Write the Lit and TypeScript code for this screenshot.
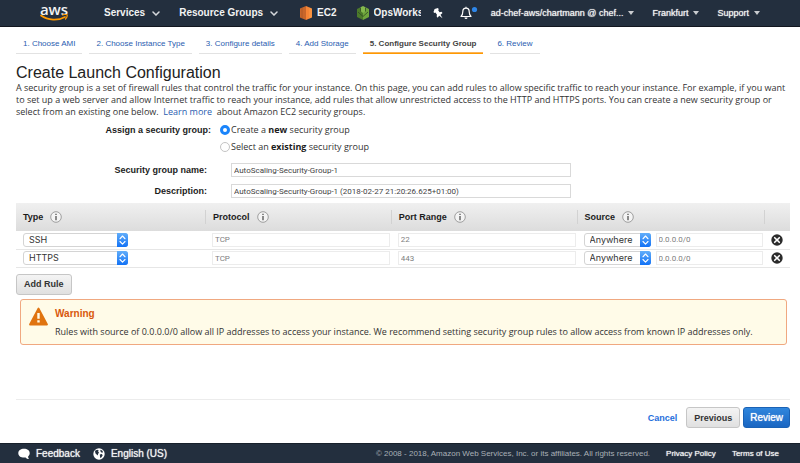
import { LitElement, html, css, svg } from "lit";
import { customElement, state } from "lit/decorators.js";

interface Rule {
  type: string;
  protocol: string;
  port: string;
  source: string;
  cidr: string;
}

const chevron = html`<svg class="chevron" viewBox="0 0 8 5" aria-hidden="true">
  <path d="M1 1l3 3 3-3" fill="none" stroke="currentColor" stroke-width="1.5" stroke-linecap="round" />
</svg>`;

const caret = html`<svg class="caret" viewBox="0 0 6 4" aria-hidden="true">
  <path d="M0 0h6L3 4z" fill="currentColor" />
</svg>`;

const info = html`<svg class="info" viewBox="0 0 12 12" aria-hidden="true">
  <circle cx="6" cy="6" r="5.3" fill="#f4f4f4" stroke="#8a8a8a" stroke-width=".8" />
  <path d="M5.4 2.8h1.2v1.2H5.4zM5.4 5h1.2v4.200H5.4z" fill="#444" />
</svg>`;

const arrows = svg`
  <path d="M0 0h8.500a2.500 2.500 0 0 1 2.500 2.500v8a2.500 2.500 0 0 1-2.500 2.500H0z" fill="url(#blue)" />
  <path d="M3 5.300l2.500-2.500L8 5.300M3 7.900l2.500 2.500L8 7.900" fill="none" stroke="#fff" stroke-width="1.1"
    stroke-linecap="round" stroke-linejoin="round" />`;

@customElement("app-root")
export class AppRoot extends LitElement {
  @state() private rules: Rule[] = [
    { type: "SSH", protocol: "TCP", port: "22", source: "Anywhere", cidr: "0.0.0.0/0" },
    { type: "HTTPS", protocol: "TCP", port: "443", source: "Anywhere", cidr: "0.0.0.0/0" },
  ];

  static styles = css`
    :host {
      display: flex;
      flex-direction: column;
      min-height: 100vh;
      background: #fff;
      color: #333;
      font: 9px/12px "Liberation Sans", Arial, sans-serif;
    }
    *, *::before, *::after { box-sizing: border-box; }
    svg { display: block; flex: none; }
    a { color: #2a5db0; text-decoration: none; }
    button, input, select { font: inherit; color: inherit; margin: 0; }
    button { cursor: pointer; }
    b, th { font-weight: 700; color: #1c1c1c; }

    .topbar {
      display: flex;
      align-items: center;
      height: 27px;
      padding: 0 40px;
      background: #232f3e;
      border-bottom: 1px solid #12161f;
      color: #f2f3f3;
      font-size: 10px;
      font-weight: 700;
    }
    .topbar a { display: flex; align-items: center; color: inherit; white-space: nowrap; }
    .topbar button {
      display: flex;
      align-items: center;
      padding: 0;
      border: 0;
      background: none;
      white-space: nowrap;
    }
    .menus, .pins, .account { display: flex; align-items: center; }
    .menus { gap: 19px; margin-left: 36px; }
    .menus button { gap: 7px; }
    .pins { gap: 20px; margin-left: 22px; }
    .pins a { gap: 5px; }
    .clip { width: 47px; overflow: hidden; }
    .account { gap: 18px; margin-left: auto; font-size: 9px; }
    .account button { gap: 5px; }
    .brand.brand {
      flex-direction: column;
      width: 28px;
      font: 600 15px/10px "Open Sans", sans-serif;
    }
    .smile { width: 28px; height: 8px; }
    .chevron { width: 8px; height: 5px; color: #d5d8dc; }
    .caret { width: 6px; height: 4px; color: #c9ccd0; }
    .service { width: 12px; height: 14px; }
    .pin { width: 11px; height: 11px; margin-left: 11px; }
    .bell { width: 18px; height: 14px; margin-left: 17px; }

    main { flex: 1; display: flex; flex-direction: column; padding: 0 10px 0 16px; }
    .steps {
      display: flex;
      gap: 7px;
      margin: 0;
      padding: 9px 0 0;
      list-style: none;
      font-size: 8px;
    }
    .steps a {
      display: block;
      padding: 2px 7px 3px;
      border-bottom: 1px solid #e2e2e2;
      white-space: nowrap;
    }
    .steps a[aria-current] {
      border-color: #f90;
      box-shadow: inset 0 -1px #fbb355;
      color: #444;
      font-weight: 700;
    }
    h1 { margin: 10px 0 0; font: 400 16px/18px "Liberation Sans", Arial, sans-serif; color: #222; }
    p { margin: 0; font-family: "Open Sans", sans-serif; }
    .intro { white-space: nowrap; }

    .form { display: grid; gap: 7px; padding-top: 6px; }
    .field { display: grid; grid-template-columns: 191px 1fr; column-gap: 24px; align-items: center; }
    .field > label { text-align: right; font-weight: 700; color: #1c1c1c; }
    .choices {
      display: grid;
      grid-template-columns: 195px 1fr;
      column-gap: 9px;
      row-gap: 5px;
      margin: 0 0 3px;
      padding: 0;
      border: 0;
    }
    .choices > b { grid-row: span 2; text-align: right; }
    .choices label { display: flex; align-items: center; gap: 1px; font-family: "Open Sans", sans-serif; }
    .choices span { white-space: pre; }
    .radio {
      appearance: none;
      width: 10px;
      height: 10px;
      border: 1px solid #c4c4c4;
      border-radius: 50%;
      background: #fff;
    }
    .radio:checked { border: 3px solid #1a84fb; }
    .text {
      width: 100%;
      height: 14px;
      padding: 0 2px;
      border: 1px solid #d9d9d9;
      background: #fff;
      color: #444;
      font: 8px/12px Roboto, sans-serif;
    }
    .wide { max-width: 340px; }

    .rules { width: 100%; margin-top: 5px; border-collapse: collapse; table-layout: fixed; }
    .rules th {
      height: 28px;
      padding: 0 7px;
      background: linear-gradient(#f0f0f0, #dcdcdc);
      text-align: left;
    }
    .head { display: flex; align-items: center; gap: 7px; height: 14px; }
    .rules th + th { padding-left: 0; }
    .rules th + th .head { border-left: 1px solid #d2d2d2; padding-left: 7px; }
    .rules td { height: 18px; padding: 0 1px 0 7px; border-bottom: 1px solid #e6e6e6; }
    .rules td.del { padding: 0 0 0 7px; }
    .c-type { width: 189px; }
    .c-main { width: 24%; }
    .c-del { width: 26px; }
    .rules .text { display: block; border-color: #ececec; color: #808080; }
    .info { width: 12px; height: 12px; }
    .pick { display: grid; flex: none; width: 105px; height: 14px; }
    .pick > * { grid-area: 1 / 1; }
    .pick select {
      appearance: none;
      height: 14px;
      padding: 0 14px 0 5px;
      border: 1px solid #d4d4d4;
      border-radius: 3px;
      background: #fff;
      color: #333;
      font: 9px/12px Inter, sans-serif;
    }
    .pick svg { justify-self: end; width: 11px; height: 14px; pointer-events: none; }
    .source { display: flex; gap: 5px; }
    .source .pick { width: 67px; }
    .source .text { flex: 1; min-width: 0; }
    .remove { display: block; padding: 0; border: 0; background: none; }
    .remove svg { width: 12px; height: 12px; }

    .btn {
      height: 21px;
      padding: 0 7px;
      border: 1px solid #c6c6c6;
      border-radius: 3px;
      background: linear-gradient(#f4f4f4, #e0e0e0);
      color: #333;
      font-weight: 700;
      white-space: nowrap;
    }
    .add { align-self: flex-start; margin-top: 6px; }
    .warning {
      display: flex;
      gap: 7px;
      margin: 4px 3px 0 4px;
      padding: 7px 8px 6px;
      border: 1px solid #f0a880;
      border-radius: 3px;
      background: #fffbe8;
    }
    .warning svg { width: 19px; height: 19px; }
    .warning h2 { margin: 0 0 6px; font-size: 10px; line-height: 13px; color: #d9580c; }

    .actions {
      display: flex;
      align-items: center;
      justify-content: flex-end;
      gap: 3px;
      margin-top: auto;
      padding: 7px 0 15px;
      border-top: 1px solid #ececec;
    }
    .cancel { margin-right: 6px; font-weight: 700; color: #1f6fdc; }
    .primary {
      padding: 0 6px;
      border-color: #1a62b5;
      background: linear-gradient(#2f86dd, #1a66c2);
      color: #fff;
    }
    .heavy { font-weight: 400; text-shadow: 0 0 1px currentColor; }
    .primary.heavy { font-size: 10px; }

    footer {
      display: flex;
      align-items: center;
      height: 20px;
      padding: 0 21px 0 18px;
      background: #232f3e;
      border-top: 1px solid #17202b;
      color: #a9afb6;
      font-size: 8px;
    }
    footer a { color: #f2f3f3; white-space: nowrap; }
    .tools, .legal { display: flex; align-items: center; }
    .tools { gap: 13px; font-size: 10px; }
    .tools a { display: flex; align-items: center; gap: 6px; }
    .tools svg { width: 12px; height: 12px; }
    .legal { gap: 16px; margin-left: auto; }
  `;

  private steps = [
    "1. Choose AMI",
    "2. Choose Instance Type",
    "3. Configure details",
    "4. Add Storage",
    "5. Configure Security Group",
    "6. Review",
  ];

  private picker(value: string, label: string, options: string[]) {
    return html`<span class="pick">
      <select aria-label=${label}>
        ${options.map((o) => html`<option ?selected=${o === value}>${o}</option>`)}
      </select>
      <svg viewBox="0 0 11 13" preserveAspectRatio="none" aria-hidden="true">
        <defs>
          <linearGradient id="blue" x2="0" y2="1">
            <stop stop-color="#62aefa" /><stop offset="1" stop-color="#1272f6" />
          </linearGradient>
        </defs>
        ${arrows}
      </svg>
    </span>`;
  }

  private removeRule(rule: Rule) {
    this.rules = this.rules.filter((r) => r !== rule);
  }

  private addRule() {
    this.rules = [...this.rules, { ...this.rules[0] }];
  }

  render() {
    return html`
      <header class="topbar">
        <a class="brand" href="#">
          aws
          <svg class="smile" viewBox="0 0 28 8" aria-hidden="true">
            <path d="M1 1.500c7 5 17 5.500 24 1.500" fill="none" stroke="#f90" stroke-width="1.700" stroke-linecap="round" />
            <path d="M22.500 1c2-.8 4-.8 4.500-.2.4.800-.200 2.800-1.500 4.200" fill="none" stroke="#f90" stroke-width="1.200" stroke-linecap="round" />
          </svg>
        </a>
        <nav class="menus">
          <button>Services ${chevron}</button>
          <button>Resource Groups ${chevron}</button>
        </nav>
        <nav class="pins">
          <a href="#">
            <svg class="service" viewBox="0 0 12 14" aria-hidden="true">
              <path d="M6 0L0 2.500v9L6 14z" fill="#c8662a" />
              <path d="M6 0l3 1.200v11.600L6 14z" fill="#f58536" />
              <path d="M9 1.200l3 1.300v9l-3 1.300z" fill="#f7913f" />
              <path d="M2 1.800v10.500" stroke="#9d5025" stroke-width=".6" />
            </svg>
            EC2
          </a>
          <a href="#">
            <svg class="service" viewBox="0 0 12 14" aria-hidden="true">
              <path d="M0 3l3-1.500L6 5v9L0 11z" fill="#4c7a2b" />
              <path d="M12 3L9 1.500 6 5v9l6-3z" fill="#6fa53c" />
              <path d="M6 0l2.500 1.200V5L6 7 3.500 5V1.200z" fill="#83b84d" />
              <path d="M1 6l5 4.500L11 6M3.500 2v3.500M8.500 2v3.500" fill="none" stroke="#2d4a22" stroke-width=".8" />
            </svg>
            <span class="clip">OpsWorks</span>
          </a>
        </nav>
        <svg class="pin" viewBox="0 0 11 11" aria-hidden="true">
          <path d="M2.600.9L6 .1l.7 1.200-.5.900 1.400 2 1.900-.5 1 1.200-2 1.800 2 3.500-3.300-2.400-1.600 2-.9-1.200.2-2.100-1.600-2-1.100.4L1.500 3.900z" fill="#fff" />
        </svg>
        <svg class="bell" viewBox="0 0 18 14" aria-hidden="true">
          <path d="M6 2.200c-2.200 0-3.200 1.700-3.200 3.600 0 2.200-.5 3.400-1.800 4.700h10c-1.300-1.300-1.800-2.500-1.800-4.700C9.200 3.900 8.200 2.200 6 2.200zM6 .8v1.400" fill="none" stroke="#fff" stroke-width="1.200" stroke-linejoin="round" />
          <path d="M4.500 11.500h3a1.500 1.500 0 0 1-3 0z" fill="#fff" />
          <circle cx="14.500" cy="3.500" r="2.600" fill="#2e86e8" />
        </svg>
        <nav class="account">
          <button class="heavy">ad-chef-aws/chartmann @ chef... ${caret}</button>
          <button class="heavy">Frankfurt ${caret}</button>
          <button class="heavy">Support ${caret}</button>
        </nav>
      </header>

      <main>
        <ol class="steps">
          ${this.steps.map((s, i) =>
            i === 4
              ? html`<li><a href="#" aria-current="step">${s}</a></li>`
              : html`<li><a href="#">${s}</a></li>`
          )}
        </ol>
        <h1>Create Launch Configuration</h1>
        <p class="intro">
          A security group is a set of firewall rules that control the traffic for your instance. On this page, you can
          add rules to allow specific traffic to reach your instance. For example, if you want<br />to set up a web
          server and allow Internet traffic to reach your instance, add rules that allow unrestricted access to the HTTP
          and HTTPS ports. You can create a new security group or<br />select from an existing one below.
          &nbsp;<a href="#">Learn more</a>&nbsp; about Amazon EC2 security groups.
        </p>

        <form class="form">
          <fieldset class="choices">
            <b>Assign a security group:</b>
            <label><input class="radio" type="radio" name="sg" checked /><span>Create a <b>new</b> security group</span></label>
            <label><input class="radio" type="radio" name="sg" /><span>Select an <b>existing</b> security group</span></label>
          </fieldset>
          <div class="field">
            <label for="name">Security group name:</label>
            <input id="name" class="text wide" type="text" value="AutoScaling-Security-Group-1" />
          </div>
          <div class="field">
            <label for="desc">Description:</label>
            <input id="desc" class="text wide" type="text" value="AutoScaling-Security-Group-1 (2018-02-27 21:20:26.625+01:00)" />
          </div>
        </form>

        <table class="rules">
          <colgroup>
            <col class="c-type" /><col class="c-main" /><col class="c-main" /><col /><col class="c-del" />
          </colgroup>
          <thead>
            <tr>
              ${["Type", "Protocol", "Port Range", "Source"].map(
                (h) => html`<th scope="col"><div class="head">${h} ${info}</div></th>`
              )}
              <th><div class="head"></div></th>
            </tr>
          </thead>
          <tbody>
            ${this.rules.map(
              (r) => html`<tr>
                <td>${this.picker(r.type, "Type", ["SSH", "HTTP", "HTTPS"])}</td>
                <td><input class="text" type="text" aria-label="Protocol" .value=${r.protocol} readonly /></td>
                <td><input class="text" type="text" aria-label="Port range" .value=${r.port} readonly /></td>
                <td>
                  <div class="source">
                    ${this.picker(r.source, "Source", ["Anywhere", "Custom IP", "My IP"])}
                    <input class="text" type="text" aria-label="CIDR" .value=${r.cidr} readonly />
                  </div>
                </td>
                <td class="del">
                  <button class="remove" aria-label="Remove rule" @click=${() => this.removeRule(r)}>
                    <svg viewBox="0 0 12 12" aria-hidden="true">
                      <circle cx="6" cy="6" r="5.700" fill="#2b2b2b" />
                      <path d="M3.700 3.700l4.600 4.600M8.300 3.700L3.700 8.300" stroke="#fff" stroke-width="1.600" stroke-linecap="round" />
                    </svg>
                  </button>
                </td>
              </tr>`
            )}
          </tbody>
        </table>
        <button class="btn add" @click=${this.addRule}>Add Rule</button>

        <section class="warning">
          <svg viewBox="0 0 19 19" aria-hidden="true">
            <path d="M9.500 1.500L18 17.500H1z" fill="#e07410" stroke="#e07410" stroke-width="1.800" stroke-linejoin="round" />
            <path d="M8.300 6h2.400v5.800H8.300zM8.300 13.200h2.400v2.300H8.300z" fill="#fffbe8" />
          </svg>
          <div>
            <h2>Warning</h2>
            <p>
              Rules with source of 0.0.0.0/0 allow all IP addresses to access your instance. We recommend setting
              security group rules to allow access from known IP addresses only.
            </p>
          </div>
        </section>

        <div class="actions">
          <a class="cancel" href="#">Cancel</a>
          <button class="btn">Previous</button>
          <button class="btn primary heavy">Review</button>
        </div>
      </main>

      <footer>
        <div class="tools">
          <a class="heavy" href="#">
            <svg viewBox="0 0 12 12" aria-hidden="true">
              <path d="M6 .8C2.700.800.300 2.600.300 5.200S2.700 9.600 6 9.600c.6 0 1.100 0 1.600-.2.900 1 2 1.600 3.400 1.700-.6-.7-.9-1.600-.9-2.700 1-.8 1.600-1.900 1.600-3.200C11.700 2.600 9.300.800 6 .8z" fill="#fff" />
            </svg>
            Feedback
          </a>
          <a class="heavy" href="#">
            <svg viewBox="0 0 12 12" aria-hidden="true">
              <circle cx="6" cy="6" r="5.700" fill="#fff" />
              <path d="M2 2.700l2.300-.9 1.400.8-.6 1.200 1 .9-1 1.100-.300 1.600-1.200-.8L2.400 5.200zM7.300 1.800l1.900.7.900 1.800-1.300.5-1.300-1.200zM6.800 6.500l2-.4.9 1.100-1.200 2-1.300.7-.2-1.700z" fill="#232f3e" />
            </svg>
            English (US)
          </a>
        </div>
        <div class="legal">
          <span>© 2008 - 2018, Amazon Web Services, Inc. or its affiliates. All rights reserved.</span>
          <a class="heavy" href="#">Privacy Policy</a>
          <a class="heavy" href="#">Terms of Use</a>
        </div>
      </footer>
    `;
  }
}
